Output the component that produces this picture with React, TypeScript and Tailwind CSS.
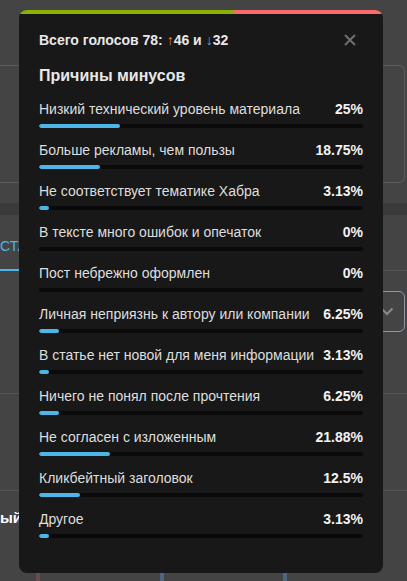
const reasons = [
  { label: "Низкий технический уровень материала", value: 25 },
  { label: "Больше рекламы, чем пользы", value: 18.75 },
  { label: "Не соответствует тематике Хабра", value: 3.13 },
  { label: "В тексте много ошибок и опечаток", value: 0 },
  { label: "Пост небрежно оформлен", value: 0 },
  { label: "Личная неприязнь к автору или компании", value: 6.25 },
  { label: "В статье нет новой для меня информации", value: 3.13 },
  { label: "Ничего не понял после прочтения", value: 6.25 },
  { label: "Не согласен с изложенным", value: 21.88 },
  { label: "Кликбейтный заголовок", value: 12.5 },
  { label: "Другое", value: 3.13 },
];

function Background() {
  return (
    <div className="flex flex-col h-[581px] overflow-hidden bg-[#444444]">
      <div className="h-[65px] shrink-0" />
      {/* card behind */}
      <div className="h-[118px] shrink-0 -ml-4 mr-[2px] border border-[#5c5c5c] rounded-md" />
      <div className="h-[20px] shrink-0" />
      <div className="h-[12px] shrink-0 bg-[#3a3a3a]" />
      {/* tabs */}
      <div className="h-[56px] shrink-0 flex border-b border-[#555]">
        <div className="w-[60px] flex items-center pt-[8px] border-b-2 border-[#4db6e9] -mb-px">
          <span className="text-[#4db6e9] text-[14px]">СТАТЬИ</span>
        </div>
      </div>
      {/* select */}
      <div className="h-[123px] shrink-0 flex justify-end pt-[20px] border-b border-[#555]">
        <div className="w-[120px] h-[41px] mr-[2px] border border-[#8897a3] rounded-md flex items-center justify-end pr-[10px]">
          <svg width="14" height="9" viewBox="0 0 14 9" fill="none">
            <path d="M1.5 1.5L7 7L12.5 1.5" stroke="#8a8a8a" strokeWidth="2" />
          </svg>
        </div>
      </div>
      <div className="h-[97px] shrink-0 border-b border-[#555]" />
      <div className="h-[53px] shrink-0 flex items-center pt-[2px]">
        <span className="text-white text-[15px] font-bold">ый</span>
      </div>
      <div className="flex-1 flex">
        <div className="ml-[36px] w-[4px] bg-[#6b4a4e]" />
        <div className="ml-[120px] w-[4px] bg-[#4f6480]" />
        <div className="ml-[119px] w-[4px] bg-[#4f6480]" />
      </div>
    </div>
  );
}

export default function App() {
  return (
    <div
      className="relative w-[407px] h-[581px] overflow-hidden"
      style={{ fontFamily: '"Liberation Sans", Arial, sans-serif' }}
    >
      <Background />
      <div className="absolute left-[19px] top-[10px] w-[364px] h-[563px] bg-[#181818] rounded-lg overflow-hidden">
        <div className="flex h-[4px]">
          <div className="w-[215px] bg-[#8ab300]" />
          <div className="flex-1 bg-[#fb6b6b]" />
        </div>
        <div className="px-[20px]">
          <div className="flex items-center justify-between h-[20px] mt-[16px]">
            <span className="text-[14px] font-bold text-[#e8e8e8]">
              Всего голосов 78: <span className="font-normal text-[#e0913a]">↑</span>46 и{" "}
              <span className="font-normal text-[#6aa5d8]">↓</span>32
            </span>
            <svg width="12" height="12" viewBox="0 0 12 12" className="mr-[7px]">
              <path d="M1 1L11 11M11 1L1 11" stroke="#6f6f6f" strokeWidth="2" />
            </svg>
          </div>
          <div className="mt-[15px] h-[22px] flex items-center text-[16px] font-bold text-[#e8e8e8]">
            Причины минусов
          </div>
          <div className="mt-[12px] flex flex-col gap-[12px]">
            {reasons.map((r) => (
              <div key={r.label}>
                <div className="flex items-center justify-between h-[20px] text-[14px]">
                  <span className="text-[#dedede]">{r.label}</span>
                  <span className="font-bold text-[#f2f2f2]">{r.value}%</span>
                </div>
                <div className="mt-[5px] h-[4px] rounded-full bg-[#0a0a0a] overflow-hidden">
                  <div
                    className="h-full rounded-full bg-[#4db6e9]"
                    style={{ width: `${r.value}%` }}
                  />
                </div>
              </div>
            ))}
          </div>
        </div>
      </div>
    </div>
  );
}
